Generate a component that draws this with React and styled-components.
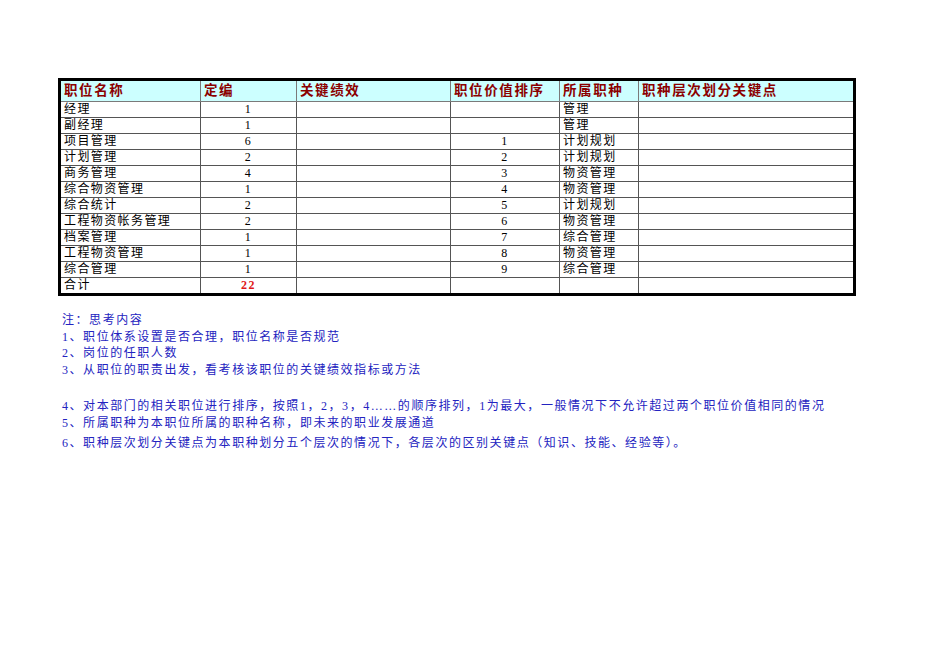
import React from "react";
import styled, { createGlobalStyle } from "styled-components";

const Global = createGlobalStyle`
  html, body { margin: 0; padding: 0; background: #fff; }
  body { font-family: "Liberation Serif", "Noto Sans CJK SC", serif; }
`;

const Page = styled.div`
  width: 950px;
  height: 672px;
  box-sizing: border-box;
  padding: 78px 0 0 58px;
  background: #fff;
`;

const Table = styled.table`
  border-collapse: separate;
  border-spacing: 0;
  border: 3px solid #000;
  table-layout: fixed;
  width: 798px;
`;

const HeadCell = styled.th`
  background: #ccffff;
  color: #8b0000;
  font-weight: bold;
  font-size: 13.5px;
  letter-spacing: 1.6px;
  text-align: left;
  height: 20px;
  padding: 0 0 0 3px;
  line-height: 20px;
  border-right: 1px solid #7a7a7a;
  border-bottom: 1px solid #7a7a7a;
  white-space: nowrap;
  overflow: hidden;
  &:last-child { border-right: none; }
`;

const Cell = styled.td`
  font-size: 12px;
  letter-spacing: 1.4px;
  color: ${(p) => (p.$total ? "#e01818" : "#000")};
  font-weight: ${(p) => (p.$total ? "bold" : "normal")};
  text-align: ${(p) => p.$align || "left"};
  height: 15px;
  line-height: 15px;
  padding: 0 0 0 ${(p) => (p.$align === "center" ? "0" : "3px")};
  border-right: 1px solid #555;
  border-bottom: ${(p) => (p.$last ? "none" : "1px solid #555")};
  white-space: nowrap;
  overflow: hidden;
  &:last-child { border-right: none; }
`;

const Notes = styled.div`
  margin: 16px 0 0 4px;
  color: #2323c0;
  font-size: 12px;
  letter-spacing: 1.55px;
  line-height: 16.5px;
`;

const NoteLine = styled.div`
  margin-top: ${(p) => p.$gap || 0}px;
  white-space: nowrap;
`;

const cols = [140, 96, 154, 109, 79, 214];
const heads = ["职位名称", "定编", "关键绩效", "职位价值排序", "所属职种", "职种层次划分关键点"];

const rows = [
  ["经理", "1", "", "管理"],
  ["副经理", "1", "", "管理"],
  ["项目管理", "6", "1", "计划规划"],
  ["计划管理", "2", "2", "计划规划"],
  ["商务管理", "4", "3", "物资管理"],
  ["综合物资管理", "1", "4", "物资管理"],
  ["综合统计", "2", "5", "计划规划"],
  ["工程物资帐务管理", "2", "6", "物资管理"],
  ["档案管理", "1", "7", "综合管理"],
  ["工程物资管理", "1", "8", "物资管理"],
  ["综合管理", "1", "9", "综合管理"],
];

export default function App() {
  return (
    <>
      <Global />
      <Page>
        <Table>
          <colgroup>
            {cols.map((w, i) => (
              <col key={i} style={{ width: w }} />
            ))}
          </colgroup>
          <thead>
            <tr>
              {heads.map((h) => (
                <HeadCell key={h}>{h}</HeadCell>
              ))}
            </tr>
          </thead>
          <tbody>
            {rows.map((r) => (
              <tr key={r[0]}>
                <Cell>{r[0]}</Cell>
                <Cell $align="center">{r[1]}</Cell>
                <Cell />
                <Cell $align="center">{r[2]}</Cell>
                <Cell>{r[3]}</Cell>
                <Cell />
              </tr>
            ))}
            <tr>
              <Cell $last>合计</Cell>
              <Cell $last $align="center" $total>22</Cell>
              <Cell $last />
              <Cell $last />
              <Cell $last />
              <Cell $last />
            </tr>
          </tbody>
        </Table>
        <Notes>
          <NoteLine>注：思考内容</NoteLine>
          <NoteLine>1、职位体系设置是否合理，职位名称是否规范</NoteLine>
          <NoteLine>2、岗位的任职人数</NoteLine>
          <NoteLine>3、从职位的职责出发，看考核该职位的关键绩效指标或方法</NoteLine>
          <NoteLine $gap={20}>4、对本部门的相关职位进行排序，按照1，2，3，4……的顺序排列，1为最大，一般情况下不允许超过两个职位价值相同的情况</NoteLine>
          <NoteLine>5、所属职种为本职位所属的职种名称，即未来的职业发展通道</NoteLine>
          <NoteLine $gap={3.5}>6、职种层次划分关键点为本职种划分五个层次的情况下，各层次的区别关键点（知识、技能、经验等）。</NoteLine>
        </Notes>
      </Page>
    </>
  );
}
